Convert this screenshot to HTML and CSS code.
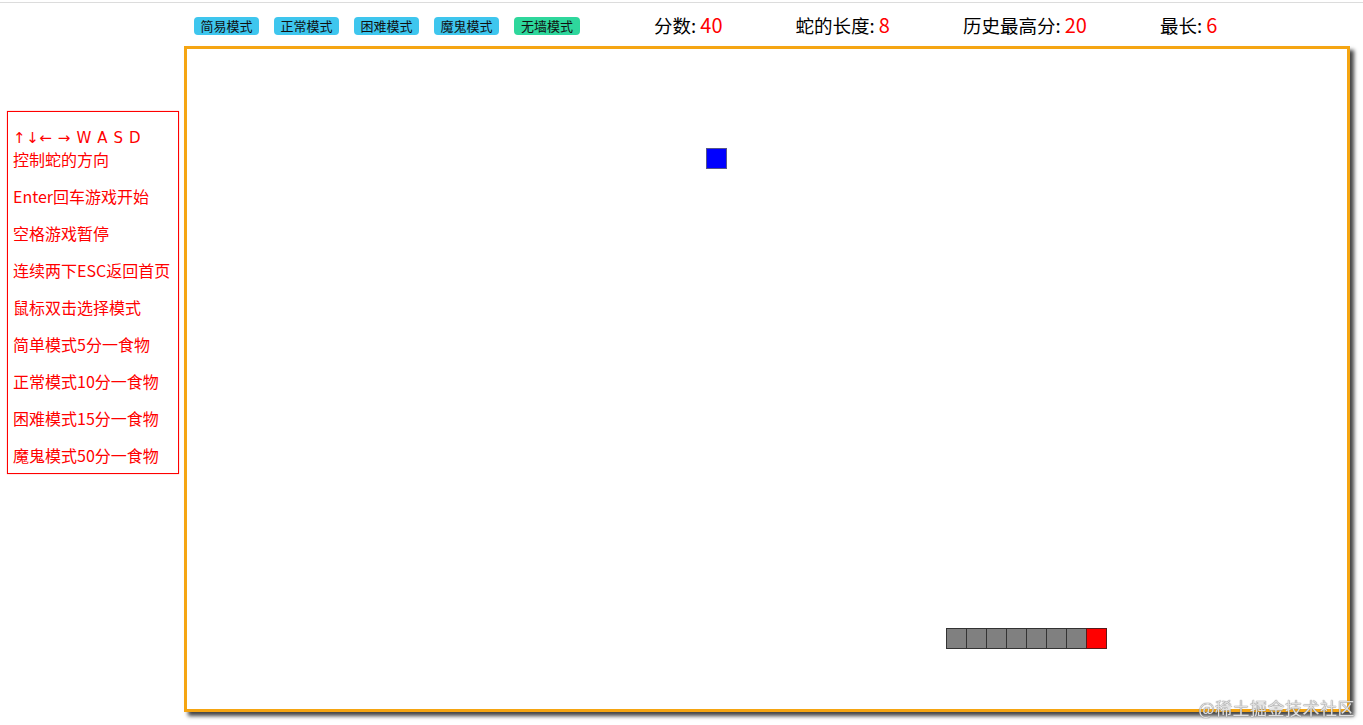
FILE: index.html
```html
<!DOCTYPE html>
<html lang="zh">
<head>
<meta charset="utf-8">
<title>贪吃蛇</title>
<link rel="stylesheet" href="styles.css">
</head>
<body>
<div class="topline"></div>
<div class="layout">
  <aside class="help">
    <p><span class="line keys">↑↓← → W A S D</span><span class="line">控制蛇的方向</span></p>
    <p>Enter回车游戏开始</p>
    <p>空格游戏暂停</p>
    <p>连续两下ESC返回首页</p>
    <p>鼠标双击选择模式</p>
    <p>简单模式5分一食物</p>
    <p>正常模式10分一食物</p>
    <p>困难模式15分一食物</p>
    <p>魔鬼模式50分一食物</p>
  </aside>
  <main class="main">
    <div class="toolbar">
      <div class="modes">
        <span class="mode">简易模式</span>
        <span class="mode">正常模式</span>
        <span class="mode">困难模式</span>
        <span class="mode">魔鬼模式</span>
        <span class="mode mode-green">无墙模式</span>
      </div>
      <div class="stats">
        <span class="stat">分数: <b>40</b></span>
        <span class="stat">蛇的长度: <b>8</b></span>
        <span class="stat">历史最高分: <b>20</b></span>
        <span class="stat">最长: <b>6</b></span>
      </div>
    </div>
    <div class="board">
      <div class="cell food" style="left:519px;top:99px"></div>
      <div class="cell body" style="left:759px;top:579px"></div>
      <div class="cell body" style="left:779px;top:579px"></div>
      <div class="cell body" style="left:799px;top:579px"></div>
      <div class="cell body" style="left:819px;top:579px"></div>
      <div class="cell body" style="left:839px;top:579px"></div>
      <div class="cell body" style="left:859px;top:579px"></div>
      <div class="cell body" style="left:879px;top:579px"></div>
      <div class="cell head" style="left:899px;top:579px"></div>
    </div>
  </main>
</div>
<div class="watermark">@稀土掘金技术社区</div>
</body>
</html>
```

FILE: styles.css
```css
html, body {
  margin: 0;
  padding: 0;
  background: #fff;
}
body {
  font-family: "Noto Sans CJK SC", "Noto Sans", sans-serif;
  color: #000;
  width: 1363px;
  height: 725px;
  overflow: hidden;
}
.topline {
  margin-top: 2px;
  height: 0;
  border-top: 1px solid #dcdcdc;
}
.layout {
  display: flex;
  align-items: flex-start;
}
.help {
  box-sizing: border-box;
  width: 172px;
  height: 363px;
  margin: 108px 0 0 7px;
  padding: 16px 2px 0 5px;
  border: 1px solid #f00;
  box-shadow: 0 0 1px rgba(255, 0, 0, 0.5);
  color: #f00;
  font-size: 16px;
  line-height: 21px;
}
.help p {
  margin: 0 0 16px;
  white-space: nowrap;
}
.help .line {
  display: block;
  height: 21px;
}
.help .keys {
  font-family: "DejaVu Sans", sans-serif;
  font-size: 15px;
  letter-spacing: 0.6px;
}
.main {
  margin-left: 5px;
}
.toolbar {
  display: flex;
  align-items: center;
  height: 40px;
  padding: 3px 0 0 10px;
}
.modes {
  display: flex;
  gap: 15px;
}
.mode {
  display: block;
  box-sizing: border-box;
  width: 65px;
  height: 18px;
  line-height: 18px;
  text-align: center;
  font-size: 13px;
  color: #111;
  background: #3ec6ee;
  border-radius: 4px;
}
.mode-green {
  width: 66px;
  background: #2ed79c;
}
.stats {
  display: flex;
  margin-left: 74px;
  font-size: 18.5px;
  line-height: 24px;
  margin-top: -3px;
}
.stat {
  margin-right: 73px;
  white-space: nowrap;
}
.stat b {
  font-weight: normal;
  color: #f00;
  font-size: 20px;
}
.board {
  position: relative;
  width: 1160px;
  height: 660px;
  border: 3px solid #f5a512;
  box-shadow: 4px 4px 4px #444;
  background: #fff;
}
.cell {
  position: absolute;
  box-sizing: border-box;
  width: 21px;
  height: 21px;
  border: 1px solid #333;
}
.food {
  background: #0000ff;
  border-color: #55558a;
}
.body {
  background: #808080;
}
.head {
  background: #ff0000;
  border-color: #5a1a1a;
}
.watermark {
  position: fixed;
  right: 8px;
  bottom: 7px;
  font-size: 17px;
  line-height: 20px;
  color: rgba(235, 235, 235, 0.9);
  text-shadow: 0 0 1px #777, 0 0 1px #777;
  letter-spacing: 0.5px;
  font-family: "Noto Sans CJK SC", serif;
}
```
